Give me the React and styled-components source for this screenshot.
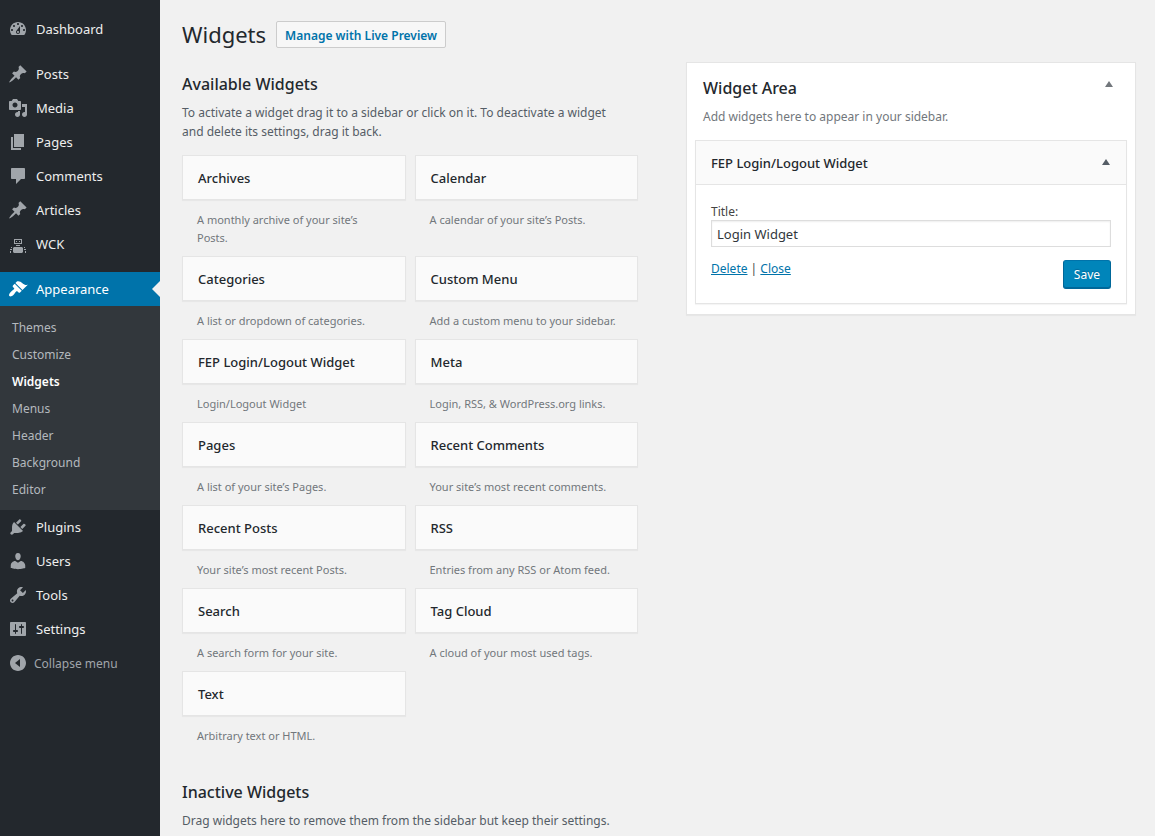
import React from 'react'
import styled, { createGlobalStyle } from 'styled-components'

const icons = {
  dashboard: 'M3.76 16h12.48c1.1-1.37 1.76-3.11 1.76-5 0-4.42-3.58-8-8-8s-8 3.58-8 8c0 1.89.66 3.63 1.76 5zM10 4c.55 0 1 .45 1 1s-.45 1-1 1-1-.45-1-1 .45-1 1-1zM6 6c.55 0 1 .45 1 1s-.45 1-1 1-1-.45-1-1 .45-1 1-1zm8 0c.55 0 1 .45 1 1s-.45 1-1 1-1-.45-1-1 .45-1 1-1zm-5.37 5.55L12 7v6c0 1.1-.9 2-2 2s-2-.9-2-2c0-.57.24-1.08.63-1.45zM4 10c.55 0 1 .45 1 1s-.45 1-1 1-1-.45-1-1 .45-1 1-1zm12 0c.55 0 1 .45 1 1s-.45 1-1 1-1-.45-1-1 .45-1 1-1zm-5 3c0-.55-.45-1-1-1s-1 .45-1 1 .45 1 1 1 1-.45 1-1z',
  pin: 'M10.44 3.02l1.82-1.82 6.36 6.35-1.83 1.82c-1.05-.68-2.48-.57-3.41.36l-.75.75c-.92.93-1.04 2.35-.35 3.41l-1.83 1.82-2.41-2.41-2.8 2.79c-.42.42-3.38 2.71-3.8 2.29s1.86-3.39 2.28-3.81l2.79-2.79L4.1 9.36l1.83-1.82c1.05.69 2.48.57 3.4-.36l.75-.75c.93-.92 1.05-2.35.36-3.41z',
  media: 'M13 11V4c0-.55-.45-1-1-1h-1.67L9 1H5L3.67 3H2c-.55 0-1 .45-1 1v7c0 .55.45 1 1 1h10c.55 0 1-.45 1-1zM7 4.5c1.38 0 2.5 1.12 2.5 2.5S8.38 9.5 7 9.5 4.5 8.38 4.5 7 5.62 4.5 7 4.5zM14 6h5v10.5c0 1.38-1.12 2.5-2.5 2.5S14 17.88 14 16.5s1.12-2.5 2.5-2.5c.17 0 .34.02.5.05V9h-3V6zm-4 8.05V13h2v3.5c0 1.38-1.12 2.5-2.5 2.5S7 17.88 7 16.5 8.12 14 9.5 14c.17 0 .34.02.5.05z',
  page: 'M6 15V2h10v13H6zm-1 1h8v2H3V5h2v11z',
  comment: 'M4 2h12c.55 0 1 .45 1 1v9c0 .55-.45 1-1 1h-3l-5 5v-5H4c-.55 0-1-.45-1-1V3c0-.55.45-1 1-1z',
  robot: 'M6 5h8v5H6zM7 6v3h6V6zM8 7h1v1H8zM11 7h1v1h-1zM8 11h4v1H8zM6 13h8l1 1v4l-1 1H6l-1-1v-4zM3 13h1v1H3zM16 13h1v1h-1zM2 15h2v1H2zM16 15h2v1h-2zM2 17h1v2H2zM17 17h1v2h-1z',
  brush: 'M14.48 11.06L7.41 3.99l1.5-1.5c.5-.56 2.3-.47 3.51.32 1.21.8 1.43 1.28 2.91 2.1 1.18.64 2.45 1.26 4.45.85zm-.71.71L6.7 4.7 4.93 6.47c-.39.39-.39 1.02 0 1.41l1.06 1.06c.39.39.39 1.03 0 1.42-.6.6-1.43 1.11-2.21 1.69-.35.26-.7.53-1.01.84C1.43 14.23.4 16.08 1.4 17.07c.99 1 2.84-.03 4.18-1.36.31-.31.58-.66.85-1.02.57-.78 1.08-1.61 1.69-2.21.39-.39 1.02-.39 1.41 0l1.06 1.06c.39.39 1.02.39 1.41 0z',
  plug: 'M13.11 4.36L9.87 7.6 8 5.73l3.24-3.24c.35-.34 1.05-.2 1.56.32.52.51.66 1.21.31 1.55zm-8 1.77l.91-1.12 9.01 9.01-1.19.84c-.71.71-2.63 1.16-3.82 1.16H6.14L4.9 17.26c-.59.59-1.54.59-2.12 0-.59-.58-.59-1.53 0-2.12l1.24-1.24v-3.88c0-1.13.4-3.19 1.09-3.89zm7.26 3.97l3.24-3.24c.34-.35 1.04-.21 1.55.31.52.51.66 1.21.31 1.55l-3.24 3.25z',
  user: 'M10 9.25c-2.27 0-2.73-3.44-2.73-3.44C7 4.02 7.82 2 9.97 2c2.16 0 2.98 2.02 2.71 3.81 0 0-.41 3.44-2.68 3.44zm0 2.57L12.72 10c2.39 0 4.52 2.33 4.52 4.53v2.49s-3.65 1.13-7.24 1.13c-3.65 0-7.24-1.13-7.24-1.13v-2.49c0-2.25 1.94-4.48 4.47-4.48z',
  wrench: 'M16.68 9.77c-1.34 1.34-3.3 1.67-4.95.99l-5.41 6.52c-.99.99-2.59.99-3.58 0s-.99-2.59 0-3.57l6.52-5.42c-.68-1.65-.35-3.61.99-4.95 1.28-1.28 3.12-1.62 4.72-1.06l-2.89 2.89 2.82 2.82 2.86-2.87c.53 1.58.18 3.39-1.08 4.65zM3.81 16.21c.4.39 1.04.39 1.43 0 .4-.4.4-1.04 0-1.43-.39-.4-1.03-.4-1.43 0-.39.39-.39 1.03 0 1.43z',
  sliders: 'M18 16V4c0-.55-.45-1-1-1H3c-.55 0-1 .45-1 1v12c0 .55.45 1 1 1h14c.55 0 1-.45 1-1zM8 11h1c.55 0 1 .45 1 1s-.45 1-1 1H8v1.5c0 .28-.22.5-.5.5s-.5-.22-.5-.5V13H6c-.55 0-1-.45-1-1s.45-1 1-1h1V5.5c0-.28.22-.5.5-.5s.5.22.5.5V11zm5-2h-1c-.55 0-1-.45-1-1s.45-1 1-1h1V5.5c0-.28.22-.5.5-.5s.5.22.5.5V7h1c.55 0 1 .45 1 1s-.45 1-1 1h-1v5.5c0 .28-.22.5-.5.5s-.5-.22-.5-.5V9z',
  collapse: 'M10 2c4.42 0 8 3.58 8 8s-3.58 8-8 8-8-3.58-8-8 3.58-8 8-8zM7 10l5 4V6z',
}

const menu = [
  [{ icon: 'dashboard', label: 'Dashboard' }],
  [
    { icon: 'pin', label: 'Posts' },
    { icon: 'media', label: 'Media' },
    { icon: 'page', label: 'Pages' },
    { icon: 'comment', label: 'Comments' },
    { icon: 'pin', label: 'Articles' },
    { icon: 'robot', label: 'WCK' },
  ],
  [
    {
      icon: 'brush',
      label: 'Appearance',
      sub: ['Themes', 'Customize', 'Widgets', 'Menus', 'Header', 'Background', 'Editor'],
    },
    { icon: 'plug', label: 'Plugins' },
    { icon: 'user', label: 'Users' },
    { icon: 'wrench', label: 'Tools' },
    { icon: 'sliders', label: 'Settings' },
  ],
]

const widgets = [
  ['Archives', 'A monthly archive of your site’s Posts.'],
  ['Calendar', 'A calendar of your site’s Posts.'],
  ['Categories', 'A list or dropdown of categories.'],
  ['Custom Menu', 'Add a custom menu to your sidebar.'],
  ['FEP Login/Logout Widget', 'Login/Logout Widget'],
  ['Meta', 'Login, RSS, & WordPress.org links.'],
  ['Pages', 'A list of your site’s Pages.'],
  ['Recent Comments', 'Your site’s most recent comments.'],
  ['Recent Posts', 'Your site’s most recent Posts.'],
  ['RSS', 'Entries from any RSS or Atom feed.'],
  ['Search', 'A search form for your site.'],
  ['Tag Cloud', 'A cloud of your most used tags.'],
  ['Text', 'Arbitrary text or HTML.'],
]

const Icon = ({ name }) => (
  <svg width="20" height="20" viewBox="0 0 20 20" fill="currentColor" fillRule="evenodd" aria-hidden="true">
    <path d={icons[name]} />
  </svg>
)

const Arrow = () => (
  <svg width="8" height="6" viewBox="0 0 8 6" fill="currentColor" aria-hidden="true">
    <path d="M4 0l4 6H0z" />
  </svg>
)

export default function App() {
  const [areaOpen, setAreaOpen] = React.useState(true)
  const [widgetOpen, setWidgetOpen] = React.useState(true)
  const [title, setTitle] = React.useState('Login Widget')

  return (
    <Page>
      <GlobalStyle />
      <Sidebar>
        {menu.map((group, i) => (
          <MenuGroup key={i}>
            {group.map((item) => (
              <li key={item.label}>
                <MenuLink href="#" $current={!!item.sub}>
                  <Icon name={item.icon} />
                  {item.label}
                </MenuLink>
                {item.sub && (
                  <SubMenu>
                    {item.sub.map((name) => (
                      <li key={name}>
                        <SubLink href="#" $current={name === 'Widgets'}>{name}</SubLink>
                      </li>
                    ))}
                  </SubMenu>
                )}
              </li>
            ))}
          </MenuGroup>
        ))}
        <CollapseButton type="button">
          <Icon name="collapse" />
          Collapse menu
        </CollapseButton>
      </Sidebar>

      <Content>
        <Header>
          <h1>Widgets</h1>
          <PreviewLink href="#">Manage with Live Preview</PreviewLink>
        </Header>

        <Columns>
          <div>
            <Section>
              <SectionTitle>Available Widgets</SectionTitle>
              <Description>
                To activate a widget drag it to a sidebar or click on it. To deactivate a widget and delete its settings, drag it back.
              </Description>
              <WidgetGrid>
                {widgets.map(([name, text]) => (
                  <div key={name}>
                    <WidgetCard>{name}</WidgetCard>
                    <WidgetText>{text}</WidgetText>
                  </div>
                ))}
              </WidgetGrid>
            </Section>
            <Section>
              <SectionTitle>Inactive Widgets</SectionTitle>
              <Description>Drag widgets here to remove them from the sidebar but keep their settings.</Description>
            </Section>
          </div>

          <Area>
            <AreaHeader>
              <SectionTitle>Widget Area</SectionTitle>
              <ToggleButton type="button" aria-label="Toggle Widget Area" onClick={() => setAreaOpen(!areaOpen)}>
                <Arrow />
              </ToggleButton>
            </AreaHeader>
            {areaOpen && (
              <>
                <AreaText>Add widgets here to appear in your sidebar.</AreaText>
                <WidgetBox>
                  <WidgetTop>
                    <h3>FEP Login/Logout Widget</h3>
                    <ToggleButton type="button" $dark aria-label="Toggle widget" onClick={() => setWidgetOpen(!widgetOpen)}>
                      <Arrow />
                    </ToggleButton>
                  </WidgetTop>
                  {widgetOpen && (
                    <WidgetForm onSubmit={(e) => e.preventDefault()}>
                      <label htmlFor="widget-title">Title:</label>
                      <input id="widget-title" type="text" value={title} onChange={(e) => setTitle(e.target.value)} />
                      <Actions>
                        <span>
                          <a href="#">Delete</a> | <a href="#">Close</a>
                        </span>
                        <SaveButton type="submit">Save</SaveButton>
                      </Actions>
                    </WidgetForm>
                  )}
                </WidgetBox>
              </>
            )}
          </Area>
        </Columns>
      </Content>
    </Page>
  )
}

const GlobalStyle = createGlobalStyle`
  * {
    box-sizing: border-box;
  }
  body {
    margin: 0;
    background: #f1f1f1;
    color: #444;
    font-family: "Noto Sans", "Open Sans", sans-serif;
    font-size: 12px;
    line-height: 19px;
  }
  h1, h2, h3, p, ul {
    margin: 0;
    padding: 0;
  }
  ul {
    list-style: none;
  }
  a {
    color: #0073aa;
  }
  button, input {
    font-family: inherit;
  }
`

const Page = styled.div`
  display: flex;
  min-height: 100vh;
`

const Sidebar = styled.nav`
  flex: 0 0 160px;
  padding-top: 12px;
  background: #23282d;
`

const MenuGroup = styled.ul`
  & + & {
    margin-top: 11px;
  }
`

const MenuLink = styled.a`
  display: flex;
  align-items: center;
  gap: 8px;
  height: 34px;
  padding-left: 8px;
  position: relative;
  font-size: 13px;
  color: ${(props) => (props.$current ? '#fff' : '#eee')};
  background: ${(props) => (props.$current ? '#0073aa' : 'transparent')};
  text-decoration: none;
  svg {
    color: ${(props) => (props.$current ? '#fff' : '#a0a5aa')};
  }
  /* notch pointing at the current page */
  &::after {
    content: '';
    display: ${(props) => (props.$current ? 'block' : 'none')};
    position: absolute;
    right: 0;
    top: 9px;
    border: 8px solid transparent;
    border-left-width: 0;
    border-right-color: #f1f1f1;
  }
`

const SubMenu = styled.ul`
  padding: 8px 0 7px;
  background: #32373c;
`

const SubLink = styled.a`
  display: block;
  padding: 4px 12px;
  color: ${(props) => (props.$current ? '#fff' : '#b4b9be')};
  font-weight: ${(props) => (props.$current ? 600 : 400)};
  text-decoration: none;
`

const CollapseButton = styled.button`
  display: flex;
  align-items: center;
  gap: 6px;
  width: 100%;
  height: 34px;
  padding: 0 0 0 8px;
  border: 0;
  background: none;
  color: #a0a5aa;
  font-size: 12px;
  cursor: pointer;
`

const Content = styled.main`
  flex: 1;
  min-width: 0;
  padding: 20px 19px 0 22px;
`

const Header = styled.header`
  display: flex;
  align-items: center;
  gap: 10px;
  height: 29px;
  h1 {
    color: #23282d;
    font-size: 22px;
    font-weight: 400;
    line-height: 29px;
  }
`

const PreviewLink = styled.a`
  padding: 4px 8px 2px;
  border: 1px solid #ccc;
  border-radius: 2px;
  background: #f7f7f7;
  font-weight: 600;
  text-decoration: none;
`

const Columns = styled.div`
  display: grid;
  grid-template-columns: 76fr 75fr;
  align-items: start;
  gap: 48px;
  padding-top: 13px;
`

const Section = styled.section`
  padding-top: 10px;
  & + & {
    padding-top: 26px;
  }
`

const SectionTitle = styled.h2`
  color: #23282d;
  font-size: 16px;
  font-weight: 500;
  line-height: 24px;
`

const Description = styled.p`
  padding: 7px 16px 0 0;
  color: #555d66;
`

const WidgetGrid = styled.div`
  display: grid;
  grid-template-columns: 1fr 1fr;
  column-gap: 9px;
  padding-top: 14px;
`

const WidgetCard = styled.h3`
  padding: 13px 15px 11px;
  border: 1px solid #e5e5e5;
  background: #fafafa;
  box-shadow: 0 1px 1px rgba(0, 0, 0, 0.04);
  color: #23282d;
  font-size: 13px;
  font-weight: 500;
  line-height: 19px;
`

const WidgetText = styled.p`
  padding: 11px 18px 9px 15px;
  color: #72777c;
  font-size: 11px;
  line-height: 18px;
`

const Area = styled.section`
  padding: 0 8px 10px;
  border: 1px solid #e5e5e5;
  background: #fff;
  box-shadow: 0 1px 1px rgba(0, 0, 0, 0.04);
`

const AreaHeader = styled.div`
  display: flex;
  justify-content: space-between;
  padding: 13px 3px 0 8px;
`

const ToggleButton = styled.button`
  display: grid;
  place-items: center;
  width: 30px;
  height: 15px;
  padding: 0;
  border: 0;
  background: none;
  color: ${(props) => (props.$dark ? '#555d66' : '#72777c')};
  cursor: pointer;
`

const AreaText = styled.p`
  padding: 7px 8px 14px;
  color: #72777c;
`

const WidgetBox = styled.div`
  border: 1px solid #e5e5e5;
  box-shadow: 0 1px 1px rgba(0, 0, 0, 0.04);
`

const WidgetTop = styled.div`
  display: flex;
  justify-content: space-between;
  padding: 13px 5px 11px 15px;
  border-bottom: 1px solid #e5e5e5;
  background: #fafafa;
  h3 {
    color: #23282d;
    font-size: 13px;
    font-weight: 500;
  }
`

const WidgetForm = styled.form`
  padding: 18px 15px 14px;
  label {
    display: block;
    line-height: 17px;
  }
  input {
    display: block;
    width: 100%;
    height: 27px;
    padding: 3px 5px;
    border: 1px solid #ddd;
    background: #fff;
    box-shadow: inset 0 1px 2px rgba(0, 0, 0, 0.07);
    color: #32373c;
    font-size: 13px;
  }
`

const Actions = styled.div`
  display: flex;
  justify-content: space-between;
  padding-top: 13px;
  line-height: 17px;
`

const SaveButton = styled.button`
  height: 29px;
  padding: 0 10px;
  border: 1px solid #006799;
  border-top-color: #0073aa;
  border-radius: 3px;
  background: #0085ba;
  box-shadow: inset 0 -1px 0 #006799;
  color: #fff;
  font-size: 12px;
  text-shadow: 0 -1px 1px #006799;
  cursor: pointer;
`
